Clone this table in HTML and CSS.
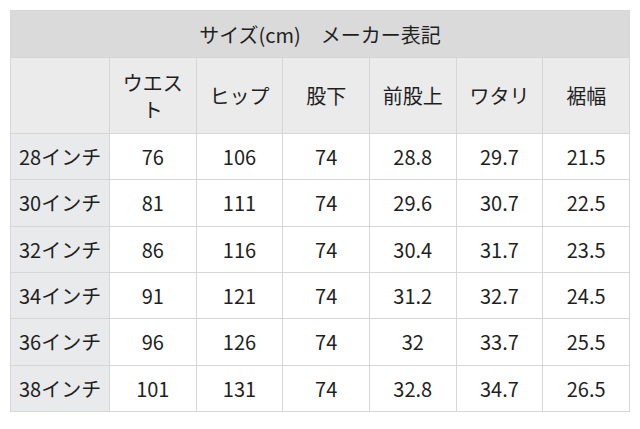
FILE: index.html
```html
<!DOCTYPE html>
<html lang="ja">
<head>
<meta charset="utf-8">
<link rel="stylesheet" href="styles.css">
</head>
<body>
<table class="size-table">
  <colgroup>
    <col class="col-label">
    <col><col><col><col><col><col>
  </colgroup>
  <thead>
    <tr class="title-row"><th colspan="7">サイズ(cm)　メーカー表記</th></tr>
    <tr class="head-row">
      <th></th><th>ウエスト</th><th>ヒップ</th><th>股下</th><th>前股上</th><th>ワタリ</th><th>裾幅</th>
    </tr>
  </thead>
  <tbody>
    <tr><th>28インチ</th><td>76</td><td>106</td><td>74</td><td>28.8</td><td>29.7</td><td>21.5</td></tr>
    <tr><th>30インチ</th><td>81</td><td>111</td><td>74</td><td>29.6</td><td>30.7</td><td>22.5</td></tr>
    <tr><th>32インチ</th><td>86</td><td>116</td><td>74</td><td>30.4</td><td>31.7</td><td>23.5</td></tr>
    <tr><th>34インチ</th><td>91</td><td>121</td><td>74</td><td>31.2</td><td>32.7</td><td>24.5</td></tr>
    <tr><th>36インチ</th><td>96</td><td>126</td><td>74</td><td>32</td><td>33.7</td><td>25.5</td></tr>
    <tr><th>38インチ</th><td>101</td><td>131</td><td>74</td><td>32.8</td><td>34.7</td><td>26.5</td></tr>
  </tbody>
</table>
</body>
</html>
```
FILE: styles.css
```css
html, body {
  margin: 0;
  padding: 0;
  background: #ffffff;
}
body {
  padding: 10px;
  font-family: "Noto Sans CJK JP", "Noto Sans", sans-serif;
  font-size: 20px;
  color: #1f1f1f;
}
.size-table {
  width: 620px;
  border-collapse: collapse;
  table-layout: fixed;
}
.col-label {
  width: 99px;
}
.size-table th,
.size-table td {
  border: 1px solid #d6d6d6;
  padding: 0 8px;
  font-weight: normal;
  text-align: center;
  line-height: 27px;
}
.title-row th {
  background: #dadada;
  height: 46px;
}
.head-row th {
  background: #ebebeb;
  height: 75px;
}
tbody tr {
  height: 46.33px;
}
tbody th {
  background: #e9eaec;
  text-align: left;
  padding-left: 6px;
  padding-right: 0;
  white-space: nowrap;
}
tbody td {
  background: #ffffff;
}
```
